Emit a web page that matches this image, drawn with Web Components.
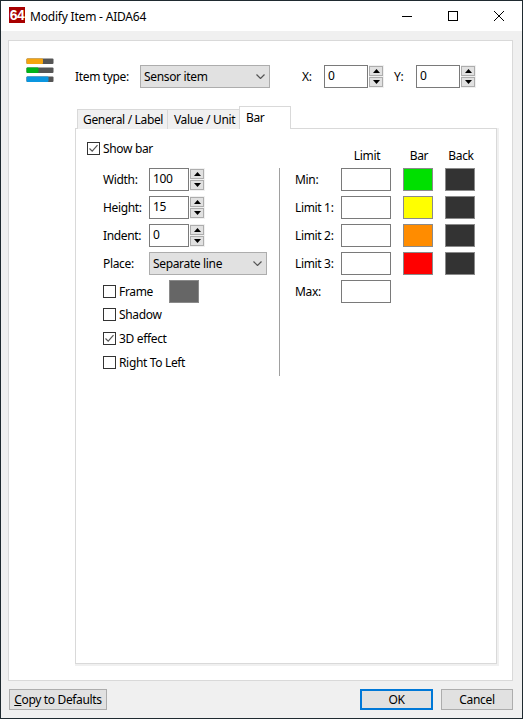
<!DOCTYPE html>
<html>
<head>
<meta charset="utf-8">
<title>Modify Item - AIDA64</title>
<style>
html, body { margin:0; padding:0; background:#1f2a30; }
body { font: 12px "Noto Sans", Roboto, Arial, sans-serif; color:#000; }
</style>
</head>
<body>
<aida-dialog caption="Modify Item - AIDA64">
  <item-head></item-head>
  <tab-box>
    <bar-page></bar-page>
  </tab-box>
  <win-btn slot="footer" label="Copy to Defaults" hot="C" style="width:98px"></win-btn>
  <win-btn slot="footer" label="OK" primary style="width:73px;margin-left:auto"></win-btn>
  <win-btn slot="footer" label="Cancel" style="width:72px;margin-left:8px"></win-btn>
</aida-dialog>

<script>
// shared bits of the win32 look
const ctlCss = `
  :host { font: 12px "Noto Sans", Roboto, Arial, sans-serif; letter-spacing:-.34px; color:#000; box-sizing:border-box; }
`;

function mk(name, html, init) {
  customElements.define(name, class extends HTMLElement {
    constructor(){
      super();
      this.attachShadow({mode:'open'});
    }
    connectedCallback(){
      const attr = (k,d='') => this.hasAttribute(k) ? this.getAttribute(k) : d;
      this.shadowRoot.innerHTML = `<style>${ctlCss}</style>` + html(attr);
      if (init) init.call(this);
    }
  });
}

mk('win-btn', a => {
  const label = a('label'), hot = a('hot');
  const txt = hot && label.startsWith(hot) ? `<u>${hot}</u>${label.slice(hot.length)}` : label;
  return `<style>
    :host { display:flex; height:21px; align-items:center; justify-content:center; background:#e1e1e1;
            border:${a('primary', null) !== null ? '2px solid #0078d7' : '1px solid #adadad'}; }
  </style>${txt}`;
});

mk('text-box', a => `<style>
  :host { display:block; width:${a('w','50')}px; height:23px; background:#fff; border:1px solid #7a7a7a;
          padding:0 3px; line-height:19px; overflow:hidden; }
</style>${a('value')}`);

mk('spin-box', a => `<style>
  :host { display:flex; align-items:center; gap:1px; }
  .up, .dn { width:14px; height:10px; background:#e1e1e1; border:1px solid #adadad; box-sizing:border-box; display:flex; align-items:center; justify-content:center; }
  .btns { display:flex; flex-direction:column; gap:1px; background:#f0f0f0; padding:1px 1px 1px 0; }
  svg { display:block; }
</style>
<text-box w="${a('w','44')}" value="${a('value')}"></text-box>
<div class="btns">
  <div class="up"><svg width="7" height="4"><path d="M3.5 0L7 4H0z"/></svg></div>
  <div class="dn"><svg width="7" height="4"><path d="M0 0H7L3.5 4z"/></svg></div>
</div>`);

mk('combo-box', a => `<style>
  :host { display:flex; width:${a('w','130')}px; height:23px; align-items:center; justify-content:space-between;
          background:#e1e1e1; border:1px solid #adadad; padding:0 4px 0 3px; }
  svg { display:block; }
</style><span>${a('value')}</span>
<svg width="9" height="5"><path d="M.5.5l4 4 4-4" fill="none" stroke="#555" stroke-width="1.2"/></svg>`);

mk('check-box', a => `<style>
  :host { display:flex; align-items:center; gap:3px; height:23px; }
  .b { width:13px; height:13px; box-sizing:border-box; border:1px solid #333; background:#fff; flex:none; }
  svg { display:block; }
</style><div class="b">${a('checked',null)!==null?'<svg width="11" height="11"><path d="M1.5 5.5L4.2 8.2 9.5 2.2" fill="none" stroke="#555" stroke-width="1.2"/></svg>':''}</div><span>${a('label')}</span>`);

mk('color-swatch', a => `<style>
  :host { display:block; width:30px; height:23px; box-sizing:border-box; background:${a('color')}; border:1px solid #8a8a8a; }
</style>`);

mk('item-head', () => `<style>
  :host { display:flex; align-items:center; height:47px; padding:23px 0 0 17px; }
  .ico { width:28px; height:24px; margin:-12px 21px 0 0; flex:none; display:block; }
  .lbl { width:65px; flex:none; }
  .xy { flex:none; }
</style>
<svg class="ico" viewBox="0 0 28 24">
  <rect x="0.5" y="0.5" width="27" height="5.5" rx="1" fill="#555"/><rect x="0.5" y="0.5" width="16.5" height="5.5" rx="1" fill="#f5a40f"/>
  <rect x="0.5" y="9.5" width="27" height="5.5" rx="1" fill="#555"/><rect x="0.5" y="9.5" width="12" height="5.5" rx="1" fill="#00b419"/>
  <rect x="0.5" y="18.5" width="27" height="5.5" rx="1" fill="#555"/><rect x="0.5" y="18.5" width="22" height="5.5" rx="1" fill="#0a96e0"/>
</svg>
<span class="lbl">Item type:</span>
<combo-box w="130" value="Sensor item"></combo-box>
<span class="xy" style="margin-left:32px;width:22px">X:</span>
<spin-box value="0"></spin-box>
<span class="xy" style="margin-left:10px;width:22px">Y:</span>
<spin-box value="0"></spin-box>`);

mk('tab-box', () => `<style>
  :host { display:flex; flex-direction:column; flex:1; min-height:0; margin:19px 15px 16px 66px; }
  .tabs { display:flex; align-items:flex-end; height:22px; padding-left:2px; margin-bottom:-1px; position:relative; z-index:1; }
  .t { height:20px; line-height:19px; box-sizing:border-box; background:#f0f0f0; border:1px solid #d9d9d9; border-bottom:0; padding-left:5px; }
  .on { height:23px; background:#fff; line-height:21px; padding-left:6px; margin-left:-1px; }
  .page { flex:1; min-height:0; background:#fff; border:1px solid #d9d9d9; box-shadow:1px 1px 0 1px #f0f0f0; }
</style>
<div class="tabs">
  <div class="t" style="width:91px">General / Label</div>
  <div class="t" style="width:73px;margin-left:-1px;padding-left:6px">Value / Unit</div>
  <div class="t on" style="width:52px">Bar</div>
</div>
<div class="page"><slot></slot></div>`);

mk('bar-page', () => `<style>
  :host { display:block; padding:8px 0 0 11px; }
  .top { height:31px; }
  .cols { display:flex; }
  .left { width:193px; box-sizing:border-box; padding-left:16px; border-right:1px solid #a0a0a0; height:208px; }
  .row { display:flex; align-items:center; height:23px; margin-bottom:5px; }
  .row > span { width:46px; flex:none; }
  .chk { margin-bottom:1px; }
  .right { padding:0 0 0 15px; }
  .grid { display:grid; grid-template-columns:46px 62px 42px 30px; row-gap:5px; align-items:center; }
  .hdr { display:flex; height:15px; margin-top:-21px; margin-bottom:6px; }
  .hdr span { display:block; text-align:center; }
</style>
<div class="top"><check-box checked label="Show bar"></check-box></div>
<div class="cols">
  <div class="left">
    <div class="row"><span>Width:</span><spin-box w="40" value="100"></spin-box></div>
    <div class="row"><span>Height:</span><spin-box w="40" value="15"></spin-box></div>
    <div class="row"><span>Indent:</span><spin-box w="40" value="0"></spin-box></div>
    <div class="row"><span>Place:</span><combo-box w="118" value="Separate line"></combo-box></div>
    <div class="row" style="margin-bottom:0"><check-box label="Frame" style="width:66px"></check-box><color-swatch color="#666"></color-swatch></div>
    <check-box class="chk" label="Shadow"></check-box>
    <check-box class="chk" checked label="3D effect"></check-box>
    <check-box class="chk" label="Right To Left"></check-box>
  </div>
  <div class="right">
    <div class="hdr">
      <span style="width:46px"></span><span style="width:52px">Limit</span><span style="width:52px">Bar</span><span style="width:32px">Back</span>
    </div>
    <div class="grid">
      <span>Min:</span><text-box></text-box><color-swatch color="#00e000"></color-swatch><color-swatch color="#333"></color-swatch>
      <span>Limit 1:</span><text-box></text-box><color-swatch color="#ffff00"></color-swatch><color-swatch color="#333"></color-swatch>
      <span>Limit 2:</span><text-box></text-box><color-swatch color="#ff8c00"></color-swatch><color-swatch color="#333"></color-swatch>
      <span>Limit 3:</span><text-box></text-box><color-swatch color="#ff0000"></color-swatch><color-swatch color="#333"></color-swatch>
      <span>Max:</span><text-box></text-box>
    </div>
  </div>
</div>`);

mk('aida-dialog', a => `<style>
  :host { display:flex; flex-direction:column; width:523px; height:719px; box-sizing:border-box; border:1px solid #1f2a30; background:#f0f0f0; overflow:hidden; }
  .cap { display:flex; align-items:center; height:30px; background:#fff; flex:none; padding-left:8px; letter-spacing:-.2px; }
  .logo { width:16px; height:16px; margin:-2px 5px 0 0; background:#a80000; color:#fff; font:bold 14px/16px "Liberation Sans", Arial, sans-serif; letter-spacing:-.5px; text-align:center; }
  .wb { margin-left:auto; display:flex; }
  .wb svg { display:block; width:46px; height:30px; }
  .panel { flex:1; min-height:0; display:flex; flex-direction:column; margin:9px 9px 0 7px; background:#fff; border:1px solid #d9d9d9; }
  .foot { display:flex; flex:none; height:21px; padding:8px 9px 8px 8px; }
</style>
<div class="cap">
  <div class="logo">64</div><span>${a('caption')}</span>
  <div class="wb">
    <svg viewBox="0 0 46 30"><path d="M18 15.5H28" stroke="#000" fill="none"/></svg>
    <svg viewBox="0 0 46 30"><rect x="18.5" y="10.5" width="9" height="9" stroke="#000" fill="none"/></svg>
    <svg viewBox="0 0 46 30"><path d="M18 10L28 20M28 10L18 20" stroke="#000" fill="none"/></svg>
  </div>
</div>
<div class="panel"><slot></slot></div>
<div class="foot"><slot name="footer"></slot></div>`);
</script>
</body>
</html>
